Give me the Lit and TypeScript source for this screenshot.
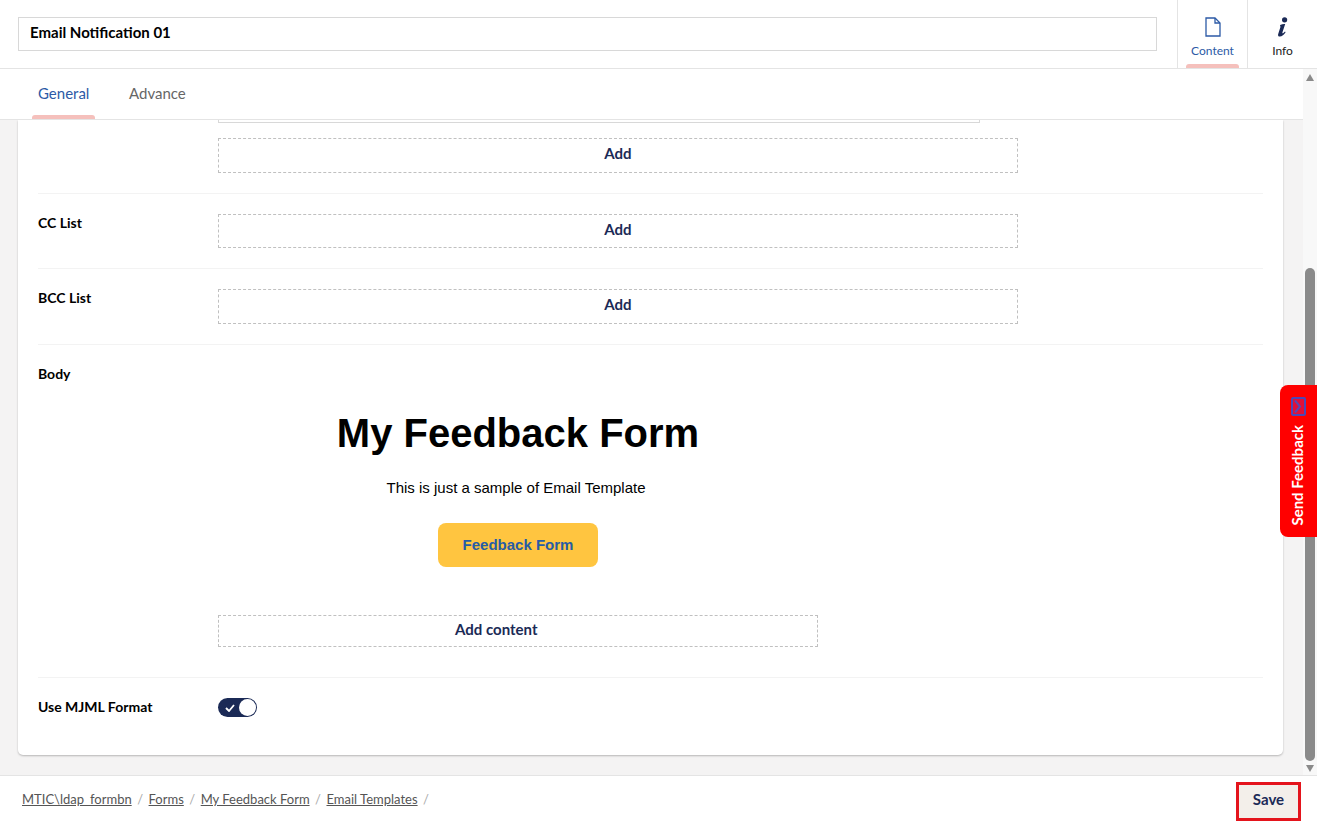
import { LitElement, html, css, svg } from "lit";
import { customElement } from "lit/decorators.js";

const docIcon = svg`<svg width="16" height="20" viewBox="0 0 16 20" fill="none" stroke="#2c5aa6" stroke-width="1.3"><path d="M1 1h9l5 5v13H1z"/><path d="M10 1v5h5"/></svg>`;
const infoIcon = svg`<svg width="12" height="20" viewBox="0 0 12 20" fill="#1b2a56"><circle cx="7.6" cy="2.8" r="2.6"/><path d="M3.2 8C5 7 7 6.7 8.2 7L5.4 15.5C5.1 16.4 5.7 16.6 6.4 16L8 14.5 8.6 15.2C7 17.5 5 19.6 2.8 19.6 1.2 19.6.7 18.4 1.2 17L3.6 9.6 3 9.2z"/></svg>`;
const chevron = svg`<svg width="15" height="19" viewBox="0 0 15 19"><rect x="1" y="1" width="13" height="17" rx="1" fill="#e0103a" stroke="#4a48b8" stroke-width="2"/><path d="M4 3.5l5 6-5 6" fill="none" stroke="#5a48b0" stroke-width="2"/></svg>`;
const check = svg`<svg width="10" height="8" viewBox="0 0 10 8" fill="none" stroke="#fff" stroke-width="1.8"><path d="M1 4l3 3 5-6"/></svg>`;

@customElement("app-root")
export class AppRoot extends LitElement {
  static styles = css`
    :host { display: flex; flex-direction: column; width: 1317px; height: 823px; overflow: hidden; font-family: Lato, "Noto Sans", sans-serif; background: #fff; position: relative; color: #000; }
    .head { height: 68px; flex: none; display: flex; align-items: stretch; border-bottom: 1px solid #e4e4e4; box-sizing: content-box; }
    .title-wrap { flex: 1; padding: 17px 20px 0 18px; }
    .title { height: 34px; box-sizing: border-box; border: 1px solid #d8d8d8; padding: 0 11px 4px; display: flex; align-items: center; font-weight: 700; font-size: 15px; }
    .tool { width: 69px; border-left: 1px solid #e4e4e4; display: flex; flex-direction: column; align-items: center; position: relative; font-size: 12px; color: #222; }
    .tool .ic { height: 27px; margin-top: 13px; display: flex; align-items: center; justify-content: center; }
    .tool .lbl { margin-top: 4px; line-height: 14px; }
    .tool.on { color: #2c5aa6; }
    .tool.on::after { content: ""; position: absolute; bottom: 0; left: 8px; width: 53px; height: 4px; background: #f5c0bc; border-radius: 3px 3px 0 0; }
    .mid { flex: 1; min-height: 0; display: flex; }
    .left { flex: 1; min-width: 0; display: flex; flex-direction: column; }
    .tabs { height: 50px; flex: none; display: flex; border-bottom: 1px solid #e4e4e4; padding-left: 32px; background: #fff; font-size: 15px; color: #666; gap: 34px; }
    .tab { position: relative; display: flex; align-items: center; padding-bottom: 2px; }
    .tab.on { color: #2c5aa6; width: 51px; padding: 0 6px 2px; }
    .tab.on::after { content: ""; position: absolute; bottom: 0; left: 0; right: 0; height: 4px; background: #f5c0bc; border-radius: 3px 3px 0 0; }
    .scroll { flex: 1; min-height: 0; overflow: hidden; display: flex; flex-direction: column; justify-content: flex-end; background: #f4f3f3; padding: 0 20px 20px 18px; }
    .card { flex: none; background: #fff; border-radius: 0 0 5px 5px; box-shadow: 0 1px 2px rgba(0,0,0,.25); padding: 0 20px; }
    .row { display: flex; border-top: 1px solid #f3f3f3; }
    .label { width: 180px; flex: none; font-size: 14px; font-weight: 700; line-height: 17px; }
    .first { display: block; border: 0; margin-left: 180px; padding-bottom: 20px; }
    .cut { width: 762px; height: 3px; border: 1px solid #d8d8d8; border-top: 0; margin-bottom: 15px; box-sizing: border-box; }
    .add { width: 800px; height: 35px; box-sizing: border-box; border: 1px dashed #c0c0c0; display: flex; align-items: center; justify-content: center; font-weight: 700; font-size: 15px; color: #1b2a56; padding-bottom: 5px; }
    .add.short { height: 34px; padding-bottom: 4px; }
    .r2 { padding: 20px 0; }
    .body { padding-top: 20px; }
    .mail { width: 600px; text-align: center; font-family: "Liberation Sans", Arial, sans-serif; }
    .mail h1 { margin: 0; font-size: 40px; line-height: 46px; padding-top: 45px; font-weight: 700; }
    .mail p { margin: 0; font-size: 15px; line-height: 18px; padding-top: 23px; padding-right: 4px; }
    .mail .cta { display: inline-flex; align-items: center; justify-content: center; width: 160px; height: 44px; box-sizing: border-box; padding-bottom: 2px; margin-top: 26px; background: #ffc540; border-radius: 8px; color: #275ca5; font-weight: 700; font-size: 15px; }
    .add.addc { width: 600px; height: 32px; margin-top: 48px; justify-content: flex-start; padding-left: 236px; padding-bottom: 4px; margin-bottom: 30px; }
    .mjml .label { padding-top: 20px; }
    .toggle { width: 39px; height: 19px; margin: 20px 0 38px; background: #1b2a56; border-radius: 10px; position: relative; display: flex; align-items: center; padding-left: 7px; box-sizing: border-box; }
    .toggle::after { content: ""; position: absolute; right: 1px; top: 1px; width: 17px; height: 17px; border-radius: 50%; background: #fff; }
    .sb { width: 14px; flex: none; background: #f8f8f8; display: flex; flex-direction: column; align-items: center; }
    .ar { flex: none; width: 0; height: 0; border-left: 4.5px solid transparent; border-right: 4.5px solid transparent; }
    .ar.up { margin-top: 5px; border-bottom: 7px solid #8a8a8a; }
    .ar.dn { margin: 4px 0 3px; border-top: 7px solid #8a8a8a; }
    .sb .sp { flex: 1; }
    .thumb { width: 10px; height: 493px; background: #8a8a8a; border-radius: 5px; }
    .foot { height: 47px; flex: none; border-top: 1px solid #e4e4e4; display: flex; align-items: flex-start; justify-content: space-between; padding: 0 16px 0 22px; font-size: 13px; color: #555; }
    .crumbs { display: flex; gap: 5.5px; padding-top: 15px; line-height: 17px; }
    .crumbs a { text-decoration: underline; }
    .crumbs i { font-style: normal; color: #aaa; }
    .save { width: 65px; height: 39px; margin-top: 6px; box-sizing: border-box; border: 3px solid #e4141c; background: #f3efea; display: flex; align-items: center; justify-content: center; font-weight: 700; font-size: 15px; color: #1b2a56; padding-bottom: 6px; }
    .fb { position: absolute; left: 1280px; top: 385px; width: 37px; height: 152px; background: #ff0000; border-radius: 8px 0 0 8px; display: flex; flex-direction: column; align-items: center; gap: 9px; padding-top: 12px; box-sizing: border-box; color: #fff; font-family: Lato, sans-serif; font-weight: 700; font-size: 15px; }
    .fb span { writing-mode: vertical-rl; transform: rotate(180deg); line-height: 17px; margin-right: 2px; }
    .fb svg { flex: none; }
  `;

  render() {
    return html`
      <div class="head">
        <div class="title-wrap"><div class="title">Email Notification 01</div></div>
        <div class="tool on"><div class="ic">${docIcon}</div><div class="lbl">Content</div></div>
        <div class="tool"><div class="ic">${infoIcon}</div><div class="lbl">Info</div></div>
      </div>
      <div class="mid">
        <div class="left">
          <div class="tabs">
            <div class="tab on">General</div>
            <div class="tab">Advance</div>
          </div>
          <div class="scroll">
            <div class="card">
              <div class="row first">
                <div class="cut"></div>
                <div class="add">Add</div>
              </div>
              <div class="row r2"><div class="label">CC List</div><div class="add short">Add</div></div>
              <div class="row r2"><div class="label">BCC List</div><div class="add">Add</div></div>
              <div class="row body"><div class="label">Body</div>
                <div>
                  <div class="mail">
                    <h1>My Feedback Form</h1>
                    <p>This is just a sample of Email Template</p>
                    <div class="cta">Feedback Form</div>
                  </div>
                  <div class="add addc">Add content</div>
                </div>
              </div>
              <div class="row mjml"><div class="label">Use MJML Format</div>
                <div class="toggle">${check}</div>
              </div>
            </div>
          </div>
        </div>
        <div class="sb">
          <div class="ar up"></div>
          <div class="sp"></div>
          <div class="thumb"></div>
          <div class="ar dn"></div>
        </div>
      </div>
      <div class="foot">
        <div class="crumbs">
          <a>MTIC\\ldap_formbn</a><i>/</i><a>Forms</a><i>/</i><a>My Feedback Form</a><i>/</i><a>Email Templates</a><i>/</i>
        </div>
        <div class="save">Save</div>
      </div>
      <div class="fb">${chevron}<span>Send Feedback</span></div>
    `;
  }
}
